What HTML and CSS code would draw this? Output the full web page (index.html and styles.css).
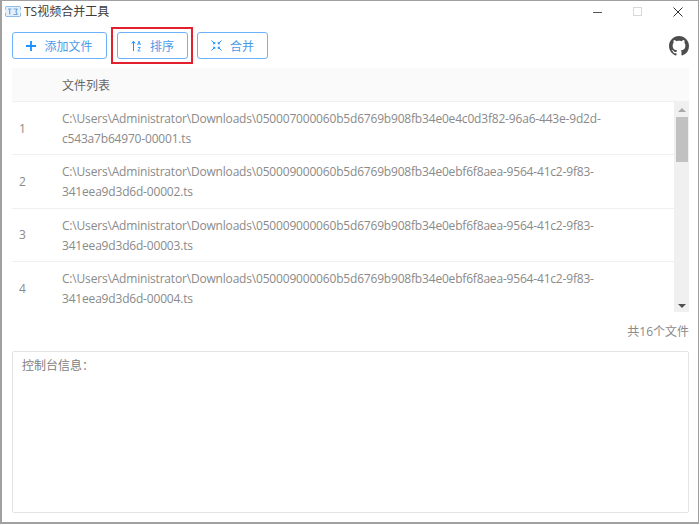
FILE: index.html
```html
<!DOCTYPE html>
<html lang="zh">
<head>
<meta charset="utf-8">
<title>TS视频合并工具</title>
<link rel="stylesheet" href="styles.css">
</head>
<body>
<div class="window">
  <header class="titlebar">
    <svg class="app-icon" width="16" height="11" viewBox="0 0 16 11"><rect x="0" y="0" width="16" height="11" fill="#e4effa"/><path d="M1 0.500h14M1 10.500h14M0.500 1v2.500M0.500 7v3M15.500 1v2.500M15.500 7v3" fill="none" stroke="#8fbdea"/><path d="M3 3h3.500M4.700 3v5.500M8.500 3h3.500l-1 2.500 1 3H8.500" fill="none" stroke="#6ea8e0" stroke-width="1.200"/></svg>
    <span class="title">TS视频合并工具</span>
    <div class="win-controls">
      <svg width="10" height="10" viewBox="0 0 10 10"><path d="M0 5.500h9" stroke="#555" stroke-width="1"/></svg>
      <svg width="10" height="10" viewBox="0 0 10 10"><rect x="0.500" y="0.500" width="8" height="8" fill="none" stroke="#d8d8d8"/></svg>
      <svg width="10" height="10" viewBox="0 0 10 10"><path d="M0.500 0.500l9 9M9.500 0.500l-9 9" stroke="#333" stroke-width="1"/></svg>
    </div>
  </header>
  <div class="toolbar">
    <button class="btn btn-add">
      <svg width="10" height="10" viewBox="0 0 10 10"><path d="M5 0v10M0 5h10" stroke="#1890ff" stroke-width="1.800"/></svg>
      <span>添加文件</span>
    </button>
    <button class="btn btn-sort">
      <svg width="11" height="12" viewBox="0 0 11 12"><path d="M2.500 11V1.500M0.800 3.500l1.700-2.200 1.700 2.200" fill="none" stroke="#1890ff"/><path d="M6.500 5l1.500-4 1.500 4M7 3.800h2M6.800 7.500h2.500l-2.500 3.500h2.700" fill="none" stroke="#1890ff" stroke-width="0.800"/></svg>
      <span>排序</span>
    </button>
    <button class="btn btn-merge">
      <svg width="11" height="11" viewBox="0 0 11 11"><path d="M0.500 0.500l3 3M3.800 2v1.800H2M10.500 0.500l-3 3M7.200 2v1.800H9M0.500 10.500l3-3M3.800 9V7.200H2M10.500 10.500l-3-3M7.200 9V7.200H9" fill="none" stroke="#1890ff" stroke-width="1"/></svg>
      <span>合并</span>
    </button>
    <svg class="github" width="20" height="20" viewBox="0 0 16 16"><path fill="#4d4d4d" d="M8 0C3.580 0 0 3.580 0 8c0 3.540 2.290 6.530 5.470 7.590.4.070.55-.17.55-.38 0-.19-.01-.82-.01-1.490-2.010.37-2.530-.49-2.690-.94-.09-.23-.48-.94-.82-1.130-.28-.15-.68-.52-.01-.53.630-.01 1.080.58 1.230.82.720 1.210 1.870.87 2.330.66.070-.52.280-.87.510-1.070-1.780-.2-3.640-.89-3.640-3.950 0-.87.310-1.590.82-2.150-.08-.2-.36-1.020.08-2.120 0 0 .67-.21 2.200.82.640-.18 1.320-.27 2-.27.680 0 1.360.09 2 .27 1.530-1.040 2.200-.82 2.200-.82.440 1.100.16 1.920.08 2.120.51.560.82 1.270.82 2.150 0 3.070-1.870 3.750-3.650 3.950.29.250.54.730.54 1.480 0 1.070-.01 1.930-.01 2.200 0 .21.150.46.550.38A8.013 8.013 0 0016 8c0-4.420-3.580-8-8-8z"/></svg>
  </div>
  <div class="list-head"><span class="col-no"></span><span>文件列表</span></div>
  <div class="list-wrap">
    <ul class="rows">
      <li class="row"><span class="col-no">1</span><span class="path">C:\Users\Administrator\Downloads\050007000060b5d6769b908fb34e0e4c0d3f82-96a6-443e-9d2d-<br>c543a7b64970-00001.ts</span></li>
      <li class="row"><span class="col-no">2</span><span class="path">C:\Users\Administrator\Downloads\050009000060b5d6769b908fb34e0ebf6f8aea-9564-41c2-9f83-<br>341eea9d3d6d-00002.ts</span></li>
      <li class="row"><span class="col-no">3</span><span class="path">C:\Users\Administrator\Downloads\050009000060b5d6769b908fb34e0ebf6f8aea-9564-41c2-9f83-<br>341eea9d3d6d-00003.ts</span></li>
      <li class="row"><span class="col-no">4</span><span class="path">C:\Users\Administrator\Downloads\050009000060b5d6769b908fb34e0ebf6f8aea-9564-41c2-9f83-<br>341eea9d3d6d-00004.ts</span></li>
    </ul>
    <div class="scrollbar">
      <span class="arrow arrow-up"></span>
      <span class="thumb"></span>
      <span class="arrow arrow-down"></span>
    </div>
  </div>
  <div class="count">共16个文件</div>
  <div class="console">控制台信息：</div>
</div>
</body>
</html>
```

FILE: styles.css
```css
* { box-sizing: border-box; }
html, body { margin: 0; padding: 0; }
body {
  width: 700px;
  height: 525px;
  background: #fff;
  font-family: "Open Sans", "Noto Sans CJK SC", sans-serif;
  font-size: 12px;
  color: #8a8a8a;
  overflow: hidden;
}
.window {
  width: 699px;
  height: 524px;
  border: 1px solid #a0a0a0;
  border-left-width: 2px;
  border-bottom-width: 2px;
  display: flex;
  flex-direction: column;
  padding: 0 9px 9px 10px;
}
.titlebar {
  display: flex;
  align-items: center;
  height: 21px;
  margin-left: -7px;
  margin-right: -8px;
}
.app-icon { flex: none; }
.title { margin-left: 3px; color: #3c3c3c; font-size: 12px; line-height: 19px; }
.win-controls { margin-left: auto; display: flex; gap: 30px; margin-right: 14px; }
.toolbar {
  display: flex;
  align-items: center;
  gap: 10px;
  height: 27px;
  margin-top: 10px;
}
.btn {
  display: flex;
  align-items: center;
  justify-content: center;
  gap: 8px;
  height: 27px;
  padding: 0;
  background: #fff;
  border: 1px solid #6db3f7;
  border-radius: 3px;
  color: #4a9bea;
  font: inherit;
  font-size: 12px;
  position: relative;
}
.btn-add { width: 95px; }
.btn-sort { width: 71px; }
.btn-merge { width: 71px; margin-left: -1px; }
.btn-sort::after {
  content: "";
  position: absolute;
  left: -7px;
  right: -6px;
  top: -6px;
  bottom: -6px;
  border: 2px solid #e5202e;
}
.github { margin-left: auto; margin-right: 0; }
.list-head {
  display: flex;
  align-items: center;
  height: 34px;
  margin-top: 9px;
  background: #fafafa;
  border-bottom: 1px solid #f0f0f0;
  color: #666;
}
.col-no { width: 50px; padding-left: 6px; flex: none; }
.list-wrap { display: flex; height: 210px; overflow: hidden; }
.rows { flex: 1; margin: 0; padding: 0; list-style: none; }
.row {
  display: flex;
  align-items: center;
  height: 53.300px;
  border-bottom: 1px solid #f0f0f0;
}
.row .col-no { padding-left: 7px; }
.path { line-height: 20px; letter-spacing: -0.185px; padding-top: 2px; }
.scrollbar {
  width: 15px;
  flex: none;
  background: #f0f0f0;
  display: flex;
  flex-direction: column;
  align-items: center;
  padding-top: 6px;
  position: relative;
}
.thumb { width: 12px; height: 45px; background: #c1c1c1; margin-top: 5px; }
.arrow { width: 0; height: 0; border-left: 4px solid transparent; border-right: 4px solid transparent; }
.arrow-up { border-bottom: 4px solid #a8a8a8; }
.arrow-down { border-top: 4px solid #505050; margin-top: auto; margin-bottom: 4px; }
.count { text-align: right; height: 39px; line-height: 39px; color: #8a8a8a; }
.console {
  flex: 1;
  border: 1px solid #e4e4e4;
  border-radius: 2px;
  padding: 4px 9px;
  color: #808080;
}
```
